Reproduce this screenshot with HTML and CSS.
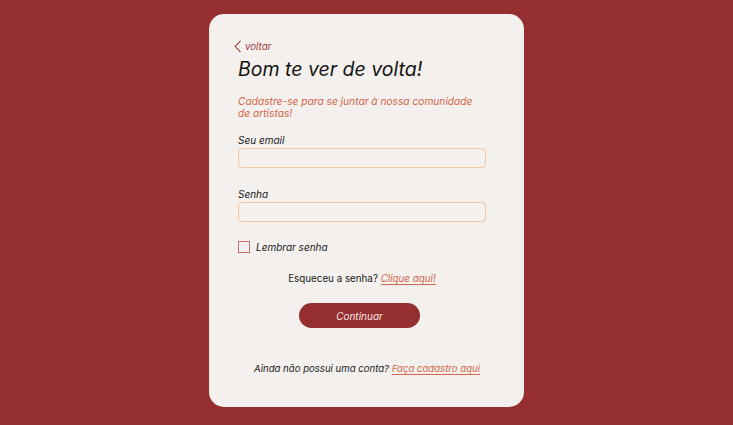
FILE: index.html
```html
<!DOCTYPE html>
<html lang="pt-BR">
<head>
<meta charset="utf-8">
<title>Login</title>
<link rel="stylesheet" href="styles.css">
</head>
<body>
<main class="card">
  <a class="back" href="#">
    <svg class="chev" width="8" height="13" viewBox="0 0 8 13"><path d="M6.5 0.8 L1.2 6.5 L6.5 12.2" fill="none" stroke="#a5393b" stroke-width="1.1"/></svg>
    <span>voltar</span>
  </a>
  <h1 class="title">Bom te ver de volta!</h1>
  <p class="subtitle">Cadastre-se para se juntar à nossa comunidade<br>de artistas!</p>
  <label class="label" for="email">Seu email</label>
  <input class="field" id="email" type="email">
  <label class="label label-2" for="senha">Senha</label>
  <input class="field" id="senha" type="password">
  <div class="remember">
    <span class="box"></span>
    <span>Lembrar senha</span>
  </div>
  <p class="forgot">Esqueceu a senha? <a href="#">Clique aqui!</a></p>
  <div class="btn-row"><button class="btn" type="button">Continuar</button></div>
  <p class="signup">Ainda não possui uma conta? <a href="#">Faça cadastro aqui</a></p>
</main>
</body>
</html>
```
FILE: styles.css
```css
html, body {
  margin: 0;
  padding: 0;
}
body {
  background: #952e30;
  font-family: Inter, "Noto Sans", sans-serif;
  display: flex;
  justify-content: center;
  padding-top: 14px;
  height: 425px;
  box-sizing: border-box;
}
.card {
  width: 315px;
  height: 393px;
  box-sizing: border-box;
  background: #f3f0ed;
  border-radius: 15px;
  padding: 25px 38px 0 29px;
  display: flex;
  flex-direction: column;
}
.back {
  display: flex;
  align-items: center;
  gap: 3px;
  margin-left: -4px;
  color: #a5393b;
  font-size: 9.7px;
  font-style: italic;
  text-decoration: none;
  height: 14px;
}
.chev {
  display: block;
}
.title {
  margin: 3px 0 0;
  font-size: 19.5px;
  font-weight: 400;
  font-style: italic;
  color: #141414;
  line-height: 26px;
}
.subtitle {
  margin: 13px 0 0;
  font-size: 10.2px;
  font-style: italic;
  color: #d4654a;
  line-height: 12px;
}
.label {
  margin-top: 15px;
  font-size: 10px;
  font-style: italic;
  color: #1a1a1a;
  line-height: 13px;
}
.label-2 {
  margin-top: 20px;
}
.field {
  margin-top: 1px;
  height: 20px;
  box-sizing: border-box;
  border: 1.5px solid #efc7a2;
  border-radius: 4px;
  background: #f3f0ed;
  width: 248px;
  outline: none;
}
.remember {
  margin-top: 19px;
  display: flex;
  align-items: center;
  gap: 6px;
  font-size: 10px;
  font-style: italic;
  color: #1a1a1a;
}
.box {
  width: 12px;
  height: 12px;
  box-sizing: border-box;
  border: 1px solid #c66a6c;
}
.forgot {
  margin: 19px 0 0;
  text-align: center;
  font-size: 9.8px;
  color: #1a1a1a;
  line-height: 13px;
}
.forgot a, .signup a {
  color: #d4654a;
  font-style: italic;
  text-decoration: underline;
  text-underline-offset: 2px;
}
.btn-row {
  display: flex;
  justify-content: center;
  margin-top: 18px;
  padding-right: 5px;
}
.btn {
  width: 121px;
  height: 25px;
  border: none;
  border-radius: 13px;
  background: #952e30;
  color: #f6e6e3;
  font-family: Inter, "Noto Sans", sans-serif;
  font-size: 10px;
  font-style: italic;
  cursor: pointer;
}
.signup {
  margin: 34px -10px 0 0;
  text-align: center;
  font-size: 9.6px;
  font-style: italic;
  color: #1a1a1a;
  line-height: 13px;
  white-space: nowrap;
}
```
